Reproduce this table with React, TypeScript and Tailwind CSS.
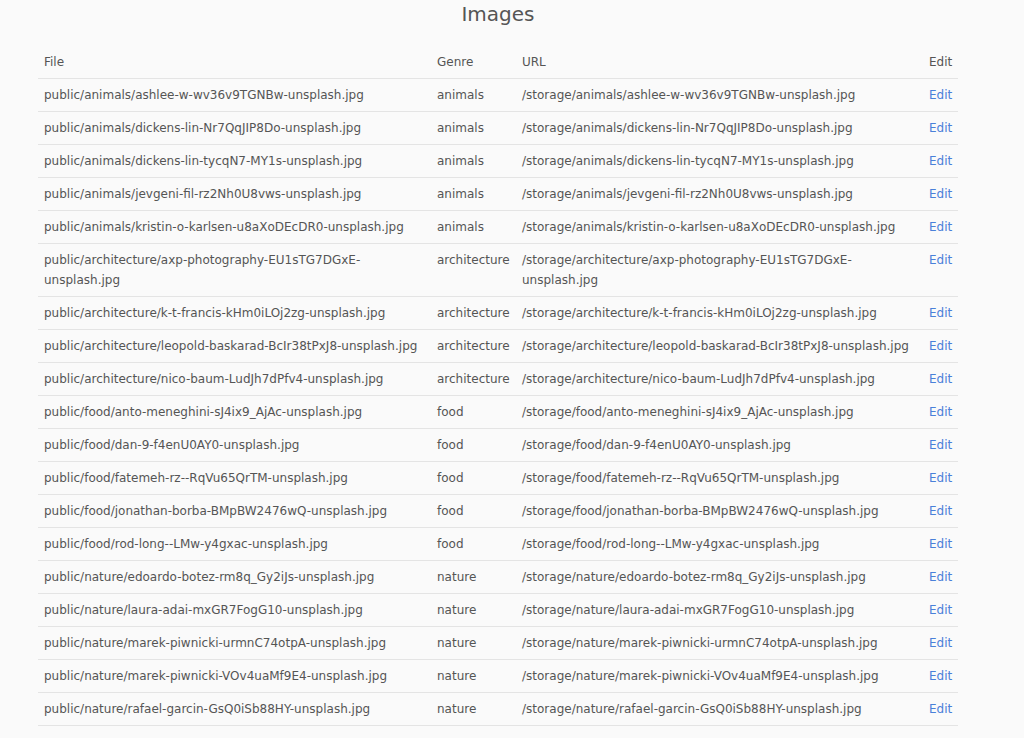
const rows: [string, string][] = [
  ["animals", "ashlee-w-wv36v9TGNBw-unsplash.jpg"],
  ["animals", "dickens-lin-Nr7QqJIP8Do-unsplash.jpg"],
  ["animals", "dickens-lin-tycqN7-MY1s-unsplash.jpg"],
  ["animals", "jevgeni-fil-rz2Nh0U8vws-unsplash.jpg"],
  ["animals", "kristin-o-karlsen-u8aXoDEcDR0-unsplash.jpg"],
  ["architecture", "axp-photography-EU1sTG7DGxE-unsplash.jpg"],
  ["architecture", "k-t-francis-kHm0iLOj2zg-unsplash.jpg"],
  ["architecture", "leopold-baskarad-BcIr38tPxJ8-unsplash.jpg"],
  ["architecture", "nico-baum-LudJh7dPfv4-unsplash.jpg"],
  ["food", "anto-meneghini-sJ4ix9_AjAc-unsplash.jpg"],
  ["food", "dan-9-f4enU0AY0-unsplash.jpg"],
  ["food", "fatemeh-rz--RqVu65QrTM-unsplash.jpg"],
  ["food", "jonathan-borba-BMpBW2476wQ-unsplash.jpg"],
  ["food", "rod-long--LMw-y4gxac-unsplash.jpg"],
  ["nature", "edoardo-botez-rm8q_Gy2iJs-unsplash.jpg"],
  ["nature", "laura-adai-mxGR7FogG10-unsplash.jpg"],
  ["nature", "marek-piwnicki-urmnC74otpA-unsplash.jpg"],
  ["nature", "marek-piwnicki-VOv4uaMf9E4-unsplash.jpg"],
  ["nature", "rafael-garcin-GsQ0iSb88HY-unsplash.jpg"],
];

export default function App() {
  return (
    <div className="min-h-screen bg-[#fafafa] pl-[38px] text-[12px] leading-[20px] text-[#555] [font-family:'DejaVu_Sans',sans-serif]">
      <div className="w-[920px]">
        <h1 className="mb-[18px] text-center text-[20px] leading-[28px] text-[#555]">Images</h1>
        <table className="w-full table-fixed border-collapse text-left">
          <colgroup>
            <col className="w-[393px]" />
            <col className="w-[85px]" />
            <col className="w-[407px]" />
            <col className="w-[35px]" />
          </colgroup>
          <thead>
            <tr className="border-b border-[#e4e4e4]">
              <th className="px-[6px] py-[6px] font-normal">File</th>
              <th className="px-[6px] py-[6px] font-normal">Genre</th>
              <th className="px-[6px] py-[6px] font-normal">URL</th>
              <th className="px-[6px] py-[6px] font-normal">Edit</th>
            </tr>
          </thead>
          <tbody>
            {rows.map(([genre, name]) => (
              <tr key={name} className="border-b border-[#e4e4e4] align-top">
                <td className="px-[6px] py-[6px]">public/{genre}/{name}</td>
                <td className="px-[6px] py-[6px]">{genre}</td>
                <td className="px-[6px] py-[6px]">/storage/{genre}/{name}</td>
                <td className="px-[6px] py-[6px]">
                  <a href="#" className="text-[#4a80d9]">Edit</a>
                </td>
              </tr>
            ))}
          </tbody>
        </table>
      </div>
    </div>
  );
}
